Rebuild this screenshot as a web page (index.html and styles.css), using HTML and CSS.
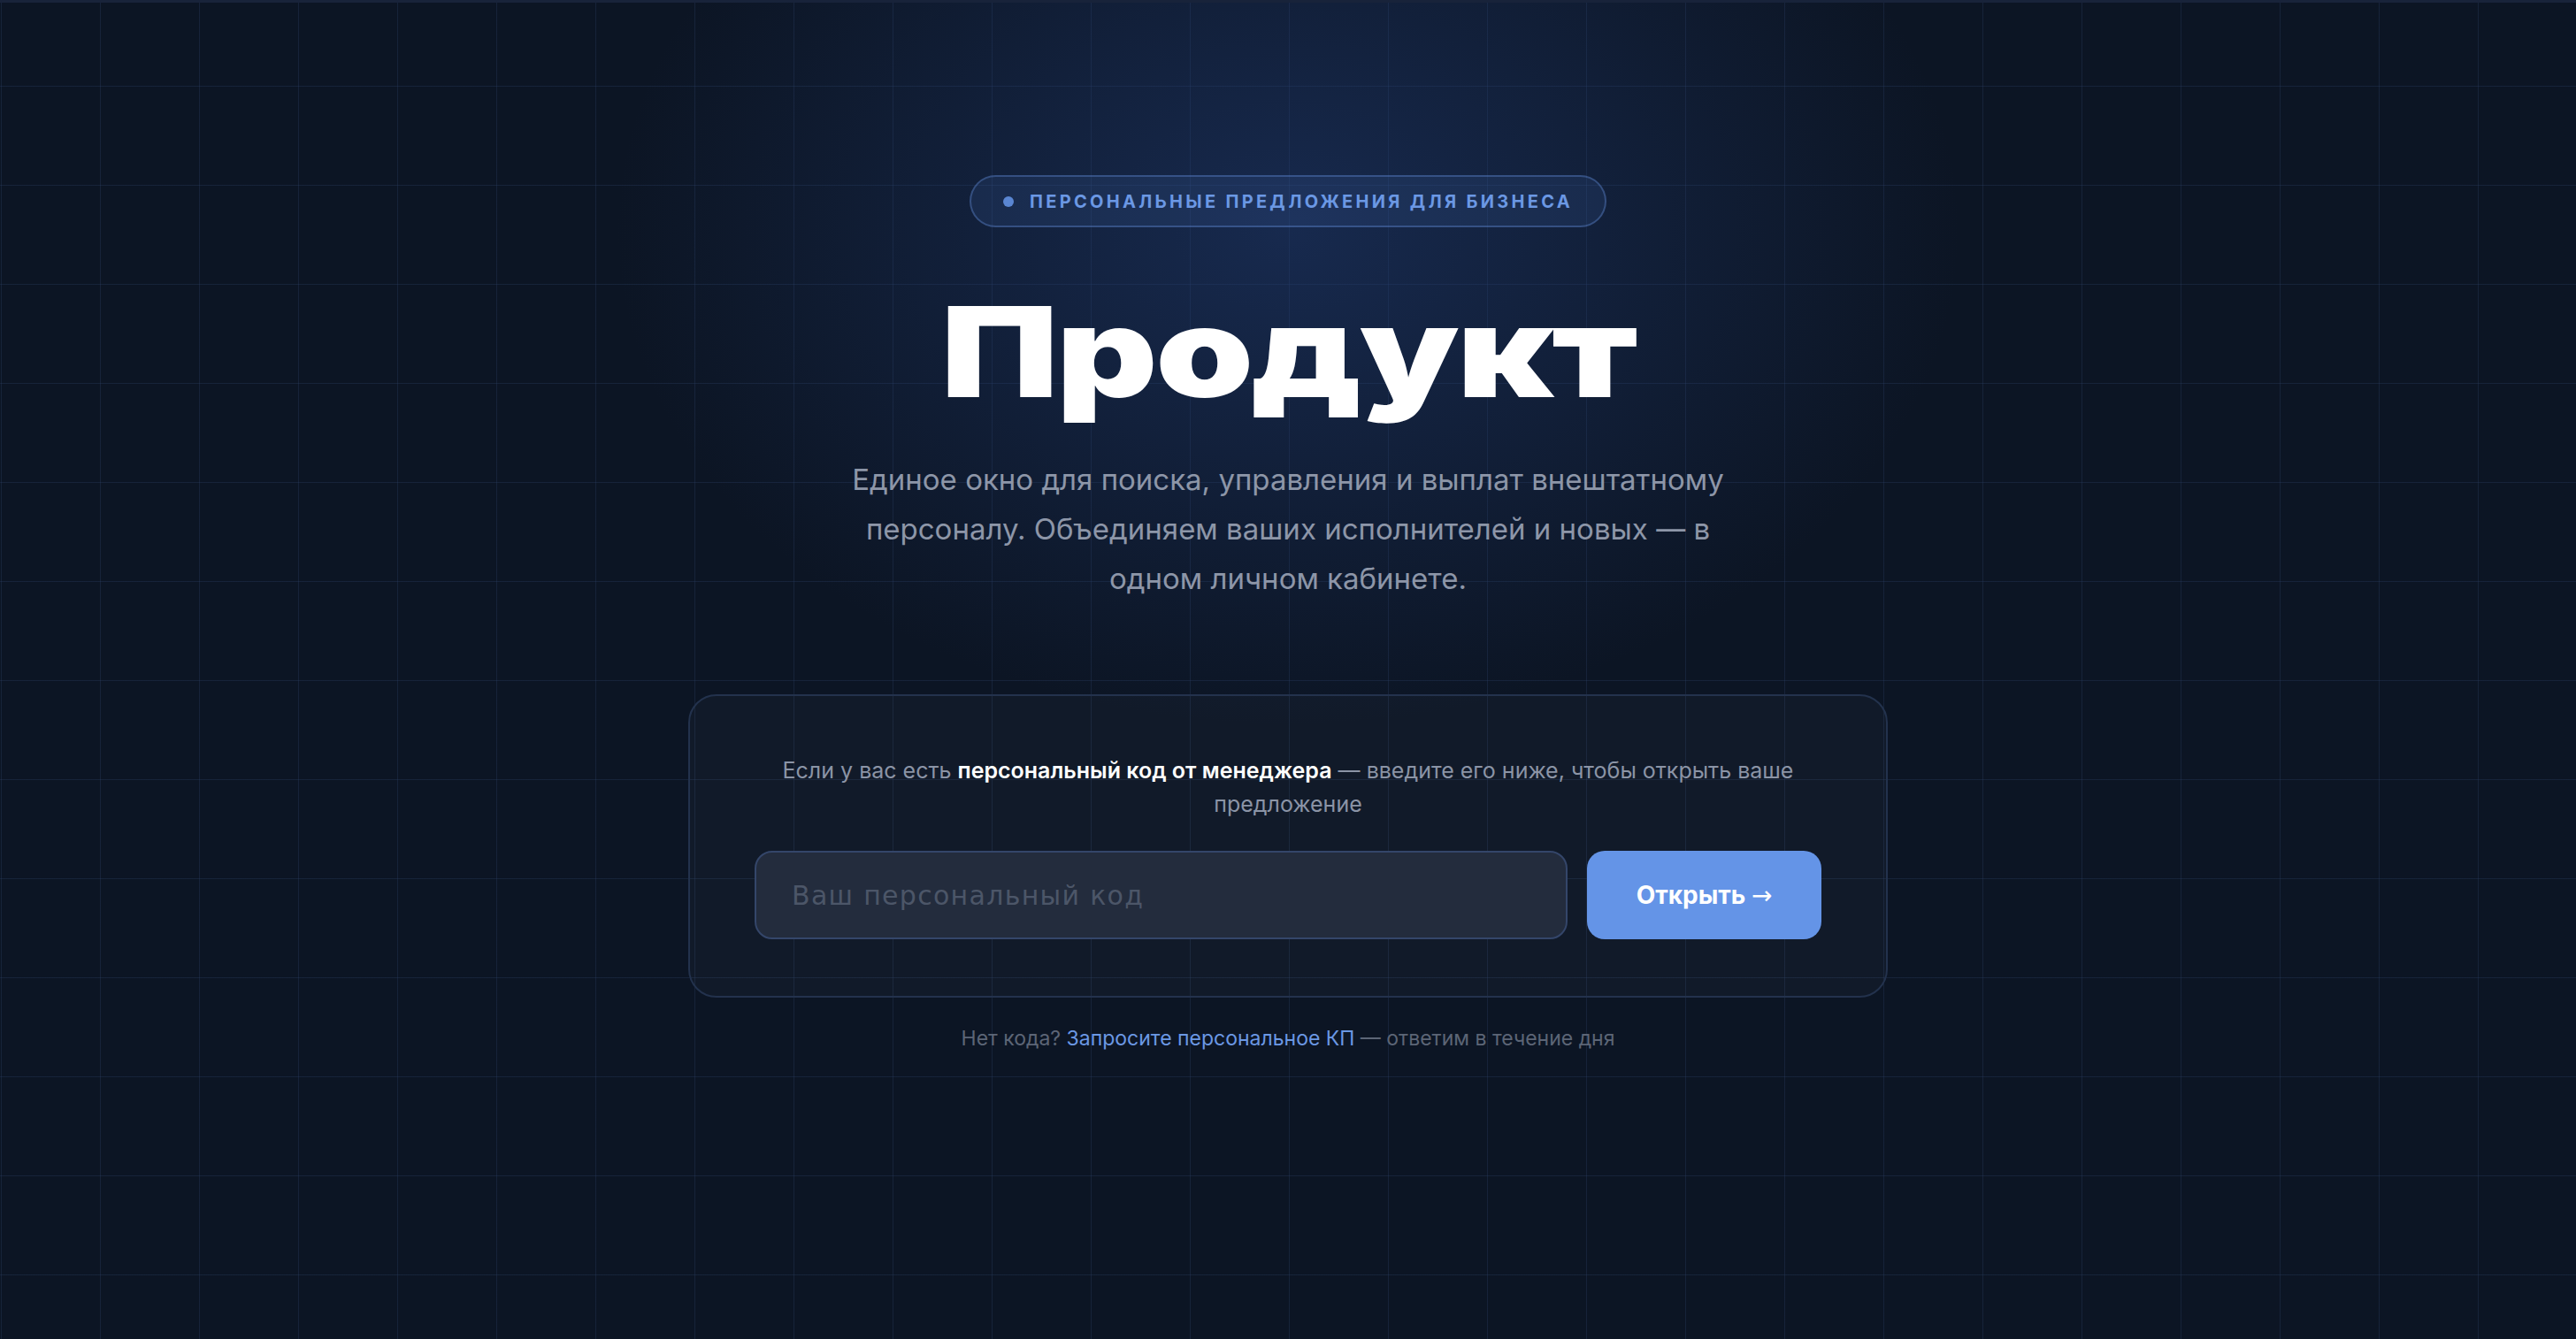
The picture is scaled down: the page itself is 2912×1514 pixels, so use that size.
FILE: index.html
```html
<!DOCTYPE html>
<html lang="ru">

<head>
    <meta charset="UTF-8">
    <meta name="viewport" content="width=device-width, initial-scale=1.0">
    <title>Продукт — персональные предложения</title>
    <link rel="stylesheet" href="styles.css">
</head>

<body>
    <main class="hero">
        <div class="badge"><span class="badge-dot"></span>Персональные предложения для бизнеса</div>

        <h1 class="title"><span>Продукт</span></h1>

        <p class="lead">Единое окно для поиска, управления и выплат внештатному персоналу. Объединяем ваших исполнителей и новых — в одном личном кабинете.</p>

        <form class="code-card" onsubmit="return false;">
            <p class="code-hint">Если у вас есть <strong>персональный код от менеджера</strong> — введите его ниже, чтобы открыть ваше предложение</p>
            <div class="code-row">
                <input class="code-input" type="text" placeholder="Ваш персональный код">
                <button class="code-btn" type="submit">Открыть <span class="arrow">→</span></button>
            </div>
        </form>

        <p class="no-code">Нет кода? <a href="#">Запросите персональное КП</a> — ответим в течение дня</p>
    </main>
</body>

</html>
```

FILE: styles.css
```css
* {
    box-sizing: border-box;
}

body {
    margin: 0;
    min-height: 100vh;
    font-family: Inter, "Noto Sans", sans-serif;
    color: #8b94a6;
    background-color: #0c1524;
    background-image:
        radial-gradient(ellipse 760px 560px at 50% 260px, rgba(34, 62, 120, 0.5), rgba(34, 62, 120, 0) 100%),
        linear-gradient(rgba(45, 66, 104, 0.32) 1px, transparent 1px),
        linear-gradient(90deg, rgba(45, 66, 104, 0.32) 1px, transparent 1px);
    background-size: 100% 100%, 112px 112px, 112px 112px;
    background-position: 0 0, 0 97px, 1px 0;
    border-top: 3px solid #18233a;
}

.hero {
    display: flex;
    flex-direction: column;
    align-items: center;
    padding-top: 195px;
}

.badge {
    display: inline-flex;
    align-items: center;
    gap: 18px;
    height: 59px;
    padding: 0 36px;
    border: 2px solid rgba(98, 140, 214, 0.38);
    border-radius: 30px;
    background-color: rgba(80, 120, 200, 0.13);
    color: #6b98e4;
    font-size: 20px;
    font-weight: 700;
    letter-spacing: 3.3px;
    text-transform: uppercase;
}

.badge-dot {
    width: 12px;
    height: 12px;
    border-radius: 50%;
    background-color: #5a86d2;
}

.title {
    margin: 69px 0 0;
    font-size: 142px;
    font-weight: 900;
    line-height: 1;
    color: #fff;
    letter-spacing: -2px;
}

.title span {
    display: inline-block;
    transform: scaleX(1.25);
}

.lead {
    width: 1020px;
    margin: 46px 0 0;
    font-size: 33px;
    line-height: 56px;
    text-align: center;
    color: #8d96a8;
}

.code-card {
    width: 1356px;
    margin-top: 103px;
    padding: 65px 73px 64px;
    border: 2px solid #23324d;
    border-radius: 32px;
    background-color: rgba(255, 255, 255, 0.025);
}

.code-hint {
    margin: 0 0 34px;
    font-size: 25px;
    line-height: 38px;
    text-align: center;
    color: #8b94a6;
}

.code-hint strong {
    color: #fff;
    font-weight: 600;
}

.code-row {
    display: flex;
    gap: 22px;
}

.code-input {
    flex: 1;
    height: 100px;
    padding: 0 40px;
    border: 2px solid #34466a;
    border-radius: 20px;
    background-color: #232c3d;
    color: #fff;
    font-family: "DejaVu Sans", sans-serif;
    font-size: 30px;
    letter-spacing: 1.3px;
    outline: none;
}

.code-input::placeholder {
    color: #4c5668;
}

.code-btn {
    width: 265px;
    height: 100px;
    border: none;
    border-radius: 20px;
    background-color: #6494e7;
    color: #fff;
    font-family: inherit;
    font-size: 28px;
    font-weight: 700;
    cursor: pointer;
}

.arrow {
    font-family: "DejaVu Sans", sans-serif;
    font-weight: 400;
}

.no-code {
    margin: 32px 0 0;
    font-size: 23px;
    color: #5c6576;
}

.no-code a {
    color: #6b98e4;
    text-decoration: none;
}
```
